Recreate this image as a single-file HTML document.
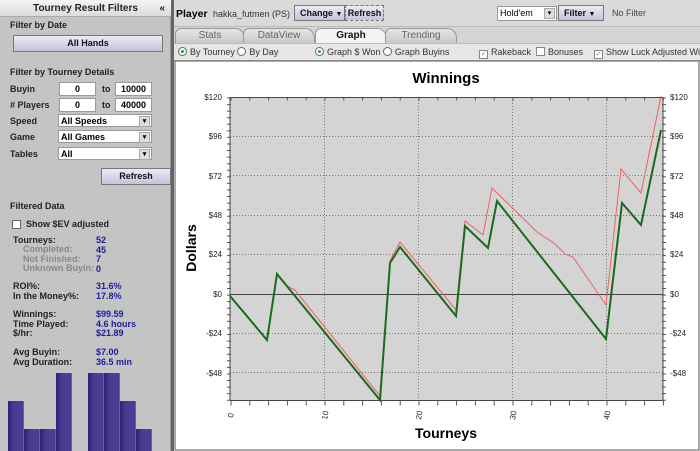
<!DOCTYPE html>
<html><head><style>
*{box-sizing:border-box;margin:0;padding:0}
body{width:700px;height:451px;overflow:hidden;background:#d4d4d4;font-family:"Liberation Sans",sans-serif;font-size:9px;position:relative}
.a{position:absolute;white-space:nowrap}
.b{font-weight:bold}
.lp{left:0;top:0;width:171px;height:451px;background:#c4c4c4;border-right:1px solid #999}
.hdr{left:0;top:0;width:171px;height:17px;background:linear-gradient(#f4f4f4,#dcdcdc);border-bottom:1px solid #aaa;text-align:center;font-weight:bold;font-size:10px;line-height:17px;color:#222}
.btn{background:linear-gradient(#ecebf5,#c5c2da);border:1px solid #777;text-align:center;font-weight:bold;font-size:9px;color:#111}
.inp{background:#fff;border:1px solid #999;text-align:center;font-weight:bold;font-size:9px;line-height:13px}
.sel{background:#fff;border:1px solid #999;font-weight:bold;font-size:9px;line-height:12px;padding-left:2px}
.sel::after{content:"▾";position:absolute;right:1px;top:1px;width:9px;height:9px;font-size:7px;line-height:9px;text-align:center;background:#ddd;border:1px solid #aaa}
.lbl{font-weight:bold;font-size:9px;color:#222}
.v{color:#1c1c9c;font-weight:bold;font-size:9px}
.g{color:#888;font-weight:bold;font-size:9px}
.k{font-weight:bold;font-size:9px;color:#222}
.bar{background:linear-gradient(90deg,#2a2478,#4a3c90 40%,#4a3c90);border-right:1px solid #6a60a8}
.tab{top:28px;height:15px;background:linear-gradient(#e6e6e6,#c8c8c8);border:1px solid #999;border-bottom:none;border-radius:6px 10px 0 0;text-align:center;font-size:10px;color:#666;line-height:14px}
.rad{display:inline-block;width:9px;height:9px;border:1px solid #666;border-radius:50%;background:#fff;vertical-align:-1px;margin-right:3px;position:relative}
.rad.on::after{content:"";position:absolute;left:2px;top:2px;width:3px;height:3px;border-radius:50%;background:#2a2}
.cb{display:inline-block;width:9px;height:9px;border:1px solid #888;background:#fff;vertical-align:-1px;margin-right:3px;font-size:7px;line-height:7px;text-align:center;color:#777}
</style></head><body>
<div class="a lp"></div>
<div class="a hdr">Tourney Result Filters<span style="position:absolute;right:6px;font-size:10px">«</span></div>
<div class="a lbl" style="left:10px;top:20px">Filter by Date</div>
<div class="a btn" style="left:13px;top:35px;width:150px;height:17px;line-height:15px">All Hands</div>
<div class="a lbl" style="left:10px;top:67px">Filter by Tourney Details</div>
<div class="a lbl" style="left:10px;top:84px">Buyin</div>
<div class="a inp" style="left:59px;top:82px;width:37px;height:14px">0</div>
<div class="a lbl" style="left:102px;top:84px">to</div>
<div class="a inp" style="left:115px;top:82px;width:37px;height:14px">10000</div>
<div class="a lbl" style="left:10px;top:100px"># Players</div>
<div class="a inp" style="left:59px;top:98px;width:37px;height:14px">0</div>
<div class="a lbl" style="left:102px;top:100px">to</div>
<div class="a inp" style="left:115px;top:98px;width:37px;height:14px">40000</div>
<div class="a lbl" style="left:10px;top:116px">Speed</div>
<div class="a sel" style="left:58px;top:114px;width:94px;height:13px">All Speeds</div>
<div class="a lbl" style="left:10px;top:132px">Game</div>
<div class="a sel" style="left:58px;top:130px;width:94px;height:13px">All Games</div>
<div class="a lbl" style="left:10px;top:149px">Tables</div>
<div class="a sel" style="left:58px;top:147px;width:94px;height:13px">All</div>
<div class="a btn" style="left:101px;top:168px;width:70px;height:17px;line-height:15px">Refresh</div>
<div class="a lbl" style="left:10px;top:201px">Filtered Data</div>
<div class="a" style="left:12px;top:220px;width:9px;height:9px;border:1px solid #666;background:#fff"></div>
<div class="a k" style="left:26px;top:219px">Show $EV adjusted</div>
<div class="a k" style="left:13px;top:236px;line-height:9.5px">Tourneys:</div>
<div class="a g" style="left:23px;top:245px;line-height:9.5px">Completed:<br>Not Finished:<br>Unknown Buyin:</div>
<div class="a v" style="left:96px;top:236px;line-height:9.5px">52<br>45<br>7<br>0</div>
<div class="a k" style="left:13px;top:282px;line-height:9.5px">ROI%:<br>In the Money%:</div>
<div class="a v" style="left:96px;top:282px;line-height:9.5px">31.6%<br>17.8%</div>
<div class="a k" style="left:13px;top:310px;line-height:9.5px">Winnings:<br>Time Played:<br>$/hr:</div>
<div class="a v" style="left:96px;top:310px;line-height:9.5px">$99.59<br>4.6 hours<br>$21.89</div>
<div class="a k" style="left:13px;top:348px;line-height:9.5px">Avg Buyin:<br>Avg Duration:</div>
<div class="a v" style="left:96px;top:348px;line-height:9.5px">$7.00<br>36.5 min</div>
<div class="a bar" style="left:8px;top:401px;width:16px;height:50px"></div>
<div class="a bar" style="left:24px;top:429px;width:16px;height:22px"></div>
<div class="a bar" style="left:40px;top:429px;width:16px;height:22px"></div>
<div class="a bar" style="left:56px;top:373px;width:16px;height:78px"></div>
<div class="a bar" style="left:88px;top:373px;width:16px;height:78px"></div>
<div class="a bar" style="left:104px;top:373px;width:16px;height:78px"></div>
<div class="a bar" style="left:120px;top:401px;width:16px;height:50px"></div>
<div class="a bar" style="left:136px;top:429px;width:16px;height:22px"></div>

<div class="a" style="left:171px;top:0;width:3px;height:451px;background:#666"></div>
<div class="a" style="left:174px;top:0;width:526px;height:27px;background:#dadada;border-bottom:1px solid #bbb"></div>
<div class="a b" style="left:176px;top:8px;font-size:10.5px">Player</div>
<div class="a" style="left:213px;top:9px;font-size:9px;color:#333">hakka_futmen (PS)</div>
<div class="a btn" style="left:294px;top:5px;width:51px;height:16px;line-height:14px;text-align:left;padding-left:5px">Change <span style="font-size:7px">▼</span></div>
<div class="a btn" style="left:345px;top:5px;width:39px;height:16px;line-height:14px;border-style:dashed">Refresh</div>
<div class="a sel" style="left:497px;top:6px;width:60px;height:15px;line-height:13px;font-weight:normal">Hold'em</div>
<div class="a btn" style="left:558px;top:5px;width:46px;height:16px;line-height:14px;text-align:left;padding-left:5px">Filter <span style="font-size:7px">▼</span></div>
<div class="a" style="left:612px;top:8px;font-size:9px;color:#444">No Filter</div>
<div class="a tab" style="left:175px;width:70px">Stats</div>
<div class="a tab" style="left:243px;width:72px">DataView</div>
<div class="a tab" style="left:315px;width:72px;background:#f4f4f4;color:#111;font-weight:bold;height:16px">Graph</div>
<div class="a tab" style="left:385px;width:72px">Trending</div>
<div class="a" style="left:174px;top:43px;width:526px;height:18px;background:#e6e6e6;border-top:1px solid #bbb;border-bottom:1px solid #888"></div>
<div class="a" style="left:178px;top:47px;font-size:9px;color:#333"><span class="rad on"></span>By Tourney <span class="rad"></span>By Day</div>
<div class="a" style="left:315px;top:47px;font-size:9px;color:#333"><span class="rad on"></span>Graph $ Won <span class="rad"></span>Graph Buyins</div>
<div class="a" style="left:479px;top:47px;font-size:9px;color:#333"><span class="cb">✓</span>Rakeback</div>
<div class="a" style="left:536px;top:47px;font-size:9px;color:#333"><span class="cb"></span>Bonuses</div>
<div class="a" style="left:594px;top:47px;font-size:9px;color:#333"><span class="cb">✓</span>Show Luck Adjusted Winnings</div>

<svg class="a" style="left:174px;top:61px" width="526" height="390" viewBox="174 61 526 390" font-family="Liberation Sans, sans-serif">
<rect x="174" y="61" width="526" height="390" fill="#fff"/>
<rect x="175" y="61" width="524" height="389" fill="none" stroke="#555" stroke-width="1"/>
<text x="446" y="83" font-size="15" font-weight="bold" text-anchor="middle">Winnings</text>
<rect x="230" y="97" width="433" height="303" fill="#d4d4d4"/>
<g stroke="#777" stroke-dasharray="1,2" stroke-width="1">
<line x1="230" y1="136.5" x2="663" y2="136.5"/><line x1="230" y1="175.5" x2="663" y2="175.5"/><line x1="230" y1="215.5" x2="663" y2="215.5"/><line x1="230" y1="254.5" x2="663" y2="254.5"/><line x1="230" y1="333.5" x2="663" y2="333.5"/><line x1="230" y1="372.5" x2="663" y2="372.5"/>
<line x1="324.5" y1="97" x2="324.5" y2="400"/><line x1="418.5" y1="97" x2="418.5" y2="400"/><line x1="512.5" y1="97" x2="512.5" y2="400"/><line x1="606.5" y1="97" x2="606.5" y2="400"/>
</g>
<line x1="230" y1="294.5" x2="663" y2="294.5" stroke="#444"/>
<g stroke="#444"><line x1="230" y1="97" x2="230" y2="400"/><line x1="663" y1="97" x2="663" y2="400"/><line x1="230" y1="400.5" x2="663" y2="400.5"/><line x1="230" y1="97.5" x2="663" y2="97.5"/></g>
<g stroke="#555" stroke-width="1">
<line x1="229" y1="97.5" x2="229" y2="401" stroke-width="4" stroke-dasharray="1,5.57"/>
<line x1="664" y1="97.5" x2="664" y2="401" stroke-width="4" stroke-dasharray="1,5.57"/>
<line x1="230.5" y1="403" x2="664" y2="403" stroke-width="5" stroke-dasharray="1,17.8"/>
<line x1="230.5" y1="99" x2="664" y2="99" stroke-width="3" stroke-dasharray="1,17.8"/>
</g>
<g font-size="8" fill="#222" text-anchor="end">
<text x="222" y="100">$120</text><text x="222" y="139">$96</text><text x="222" y="179">$72</text><text x="222" y="218">$48</text><text x="222" y="257">$24</text><text x="222" y="297">$0</text><text x="222" y="336">-$24</text><text x="222" y="376">-$48</text>
</g>
<g font-size="8" fill="#222">
<text x="670" y="100">$120</text><text x="670" y="139">$96</text><text x="670" y="179">$72</text><text x="670" y="218">$48</text><text x="670" y="257">$24</text><text x="670" y="297">$0</text><text x="670" y="336">-$24</text><text x="670" y="376">-$48</text>
</g>
<g font-size="8" fill="#222">
<text transform="translate(233,418) rotate(-80)">0</text><text transform="translate(327,420) rotate(-80)">10</text><text transform="translate(421,420) rotate(-80)">20</text><text transform="translate(515,420) rotate(-80)">30</text><text transform="translate(609,420) rotate(-80)">40</text>
</g>
<text x="446" y="438" font-size="14" font-weight="bold" text-anchor="middle">Tourneys</text>
<text transform="translate(196,248) rotate(-90)" font-size="14" font-weight="bold" text-anchor="middle">Dollars</text>
<polyline fill="none" stroke="#f06060" stroke-width="1" points="230,296 267,340 277,274 287,286 295,290 380,396 390,261 400,242 456,310 465,221 483,235 492,188 537,232 555,244 565,254 573,257 606,305 621,169 641,193 661,96"/>
<polyline fill="none" stroke="#1a6a1a" stroke-width="2" points="230,296 267,340 277,274 380,400 390,263 400,247 456,316 465,226 488,248 497,201 606,339 622,203 641,225 661,130"/>
</svg>
</body></html>
